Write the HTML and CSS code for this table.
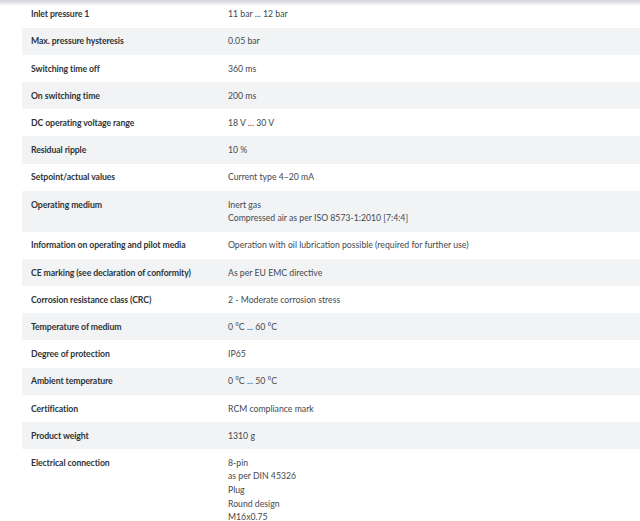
FILE: index.html
```html
<!DOCTYPE html>
<html lang="en">
<head>
<meta charset="utf-8">
<title>Technical data</title>
<link rel="stylesheet" href="styles.css">
</head>
<body>
<div class="topshade"></div>
<div class="specs">
  <div class="row"><div class="label">Inlet pressure 1</div><div class="value">11 bar ... 12 bar</div></div>
  <div class="row alt"><div class="label">Max. pressure hysteresis</div><div class="value">0.05 bar</div></div>
  <div class="row"><div class="label">Switching time off</div><div class="value">360 ms</div></div>
  <div class="row alt"><div class="label">On switching time</div><div class="value">200 ms</div></div>
  <div class="row"><div class="label">DC operating voltage range</div><div class="value">18 V ... 30 V</div></div>
  <div class="row alt"><div class="label">Residual ripple</div><div class="value">10 %</div></div>
  <div class="row"><div class="label">Setpoint/actual values</div><div class="value">Current type 4–20 mA</div></div>
  <div class="row alt"><div class="label">Operating medium</div><div class="value">Inert gas<br>Compressed air as per ISO 8573-1:2010 [7:4:4]</div></div>
  <div class="row"><div class="label">Information on operating and pilot media</div><div class="value">Operation with oil lubrication possible (required for further use)</div></div>
  <div class="row alt"><div class="label">CE marking (see declaration of conformity)</div><div class="value">As per EU EMC directive</div></div>
  <div class="row"><div class="label">Corrosion resistance class (CRC)</div><div class="value">2 - Moderate corrosion stress</div></div>
  <div class="row alt"><div class="label">Temperature of medium</div><div class="value">0 °C ... 60 °C</div></div>
  <div class="row"><div class="label">Degree of protection</div><div class="value">IP65</div></div>
  <div class="row alt"><div class="label">Ambient temperature</div><div class="value">0 °C ... 50 °C</div></div>
  <div class="row"><div class="label">Certification</div><div class="value">RCM compliance mark</div></div>
  <div class="row alt"><div class="label">Product weight</div><div class="value">1310 g</div></div>
  <div class="row"><div class="label">Electrical connection</div><div class="value">8-pin<br>as per DIN 45326<br>Plug<br>Round design<br>M16x0.75</div></div>
</div>
</body>
</html>
```
FILE: styles.css
```css
html, body {
  margin: 0;
  padding: 0;
  background: #ffffff;
}
body {
  font-family: "Lato", "Liberation Sans", sans-serif;
  font-size: 8.7px;
  color: #444a50;
  overflow: hidden;
}
.topshade {
  position: fixed;
  top: 0;
  left: 0;
  right: 0;
  height: 6px;
  background: linear-gradient(to bottom, #d3d5da 0px, #dcdee2 2px, #eef0f2 4px, rgba(255,255,255,0) 6px);
  z-index: 2;
}
.specs {
  margin-left: 22px;
  padding-top: 0.5px;
}
.row {
  display: grid;
  grid-template-columns: 206px 1fr;
  padding: 6.8px 0;
  line-height: 13.6px;
}
.row.alt {
  background: #f2f3f5;
}
.label {
  padding-left: 9px;
  font-weight: 700;
  letter-spacing: -0.09px;
  color: #2f3438;
}
.value {
  color: #43494f;
}
```
